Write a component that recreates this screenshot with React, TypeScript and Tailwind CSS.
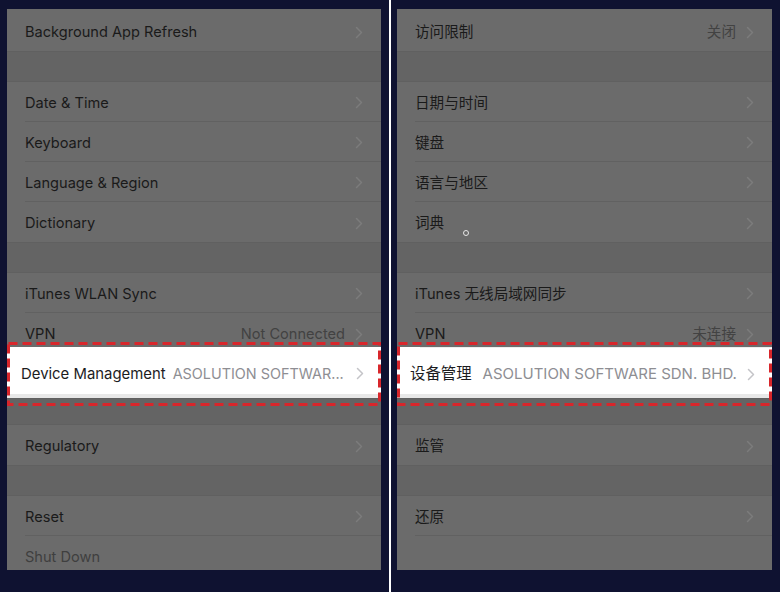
import React from "react";

const ROW_BG = "bg-[#6b6b6b]";

function Chevron({ color = "#7c7c7c" }: { color?: string }) {
  return (
    <svg width="8" height="13" viewBox="0 0 8 13" className="shrink-0">
      <path d="M1.5 1.5 L6.5 6.5 L1.5 11.5" fill="none" stroke={color} strokeWidth="1.5" strokeLinecap="round" strokeLinejoin="round" />
    </svg>
  );
}

function Row({
  label,
  value,
  chevron = true,
  border = true,
  h = "h-10",
  labelClass = "text-[#1a1a1a]",
  children,
}: {
  label: string;
  value?: string;
  chevron?: boolean;
  border?: boolean;
  h?: string;
  labelClass?: string;
  children?: React.ReactNode;
}) {
  return (
    <div className={`relative ${h} shrink-0 pl-[18px] ${ROW_BG} flex`}>
      <div className={`flex flex-1 items-center pt-[2px] pr-[18px] ${border ? "border-b border-[#616161]" : ""}`}>
        <span className={`whitespace-nowrap text-[14.6px] leading-5 ${labelClass}`}>{label}</span>
        <div className="ml-auto flex items-center gap-[10px]">
          {value && <span className="text-[14.6px] leading-5 text-[#424242]">{value}</span>}
          {chevron && <Chevron />}
        </div>
      </div>
      {children}
    </div>
  );
}

function Band({ h = "h-[31px]" }: { h?: string }) {
  return <div className={`${h} shrink-0 bg-[#646464] border-y border-[#606060]`} />;
}

function Highlight({
  label,
  value,
  width,
  pl,
  gap,
  labelSize,
  valueSize,
  line,
}: {
  label: string;
  value: string;
  width: number;
  pl: string;
  gap: string;
  labelSize: string;
  valueSize: string;
  line?: boolean;
}) {
  return (
    <div className="relative h-[51px] shrink-0 flex flex-col bg-white">
      {line && <div className="ml-[23px] h-px bg-[#ececec]" />}
      <div className={`flex h-[47px] items-center pt-[6px] ${pl} pr-[17px]`}>
        <span className={`shrink-0 whitespace-nowrap ${labelSize} leading-5 text-[#1c1c1e]`}>{label}</span>
        <span className={`${gap} whitespace-nowrap ${valueSize} leading-5 text-[#8e8e93]`}>{value}</span>
        <div className="ml-auto pl-2">
          <Chevron color="#c4c4c8" />
        </div>
      </div>
      <div className="h-[4px] bg-[#e8e8e8]" />
      <svg
        className="pointer-events-none absolute left-0 top-[-5px]"
        width={width}
        height={64}
        viewBox={`0 0 ${width} 64`}
      >
        <rect
          x="1.5"
          y="1.5"
          width={width - 3}
          height={61}
          fill="none"
          stroke="#d8262b"
          strokeWidth="3"
          strokeDasharray="9 5"
        />
      </svg>
    </div>
  );
}

function VpnRow({ value }: { value: string }) {
  return (
    <div className={`h-[34px] shrink-0 pl-[18px] ${ROW_BG} flex items-start pt-[11px] pr-[18px]`}>
      <span className="text-[14.6px] leading-5 text-[#1a1a1a]">VPN</span>
      <div className="ml-auto flex items-center gap-[10px] h-5">
        <span className="text-[14.6px] leading-5 text-[#424242]">{value}</span>
        <Chevron />
      </div>
    </div>
  );
}

function LeftPanel() {
  return (
    <div className={`relative flex h-[561px] w-[374px] flex-col overflow-hidden ${ROW_BG}`}>
      <Row label="Background App Refresh" h="h-[42px] pt-[2px]" border={false} />
      <Band />
      <Row label="Date & Time" />
      <Row label="Keyboard" />
      <Row label="Language & Region" />
      <Row label="Dictionary" border={false} />
      <Band />
      <Row label="iTunes WLAN Sync" />
      <VpnRow value="Not Connected" />
      <Highlight
        label="Device Management"
        value="ASOLUTION SOFTWAR..."
        width={374}
        pl="pl-[14px]"
        gap="ml-[7px]"
        labelSize="text-[14.9px]"
        valueSize="text-[14.4px]"
      />
      <Band h="h-[27px]" />
      <Row label="Regulatory" border={false} />
      <Band />
      <Row label="Reset" />
      <Row label="Shut Down" chevron={false} border={false} labelClass="text-[#3f3f3f]" />
    </div>
  );
}

function RightPanel() {
  return (
    <div className={`relative flex h-[561px] w-[375px] flex-col overflow-hidden ${ROW_BG}`}>
      <Row label="访问限制" value="关闭" h="h-[42px] pt-[2px]" border={false} />
      <Band />
      <Row label="日期与时间" />
      <Row label="键盘" />
      <Row label="语言与地区" />
      <Row label="词典" border={false}>
        <div className="absolute left-[66px] top-[28px] h-[6px] w-[6px] rounded-full border border-[#e6e6e6]" />
      </Row>
      <Band />
      <Row label="iTunes 无线局域网同步" />
      <VpnRow value="未连接" />
      <Highlight
        label="设备管理"
        value="ASOLUTION SOFTWARE SDN. BHD."
        width={375}
        pl="pl-[13px]"
        gap="ml-[11px]"
        labelSize="text-[15.4px]"
        valueSize="text-[15px]"
        line
      />
      <Band h="h-[27px]" />
      <Row label="监管" border={false} />
      <Band />
      <Row label="还原" />
      <Row label="" chevron={false} border={false} />
    </div>
  );
}

export default function App() {
  return (
    <div className="flex h-[592px] w-[780px] overflow-hidden bg-[#0f1231] font-['Inter','Noto_Sans_CJK_SC',sans-serif]">
      <div className="pl-[7px] pr-[8px] pt-[9px]">
        <LeftPanel />
      </div>
      <div className="w-[2px] bg-white" />
      <div className="pl-[6px] pt-[9px]">
        <RightPanel />
      </div>
    </div>
  );
}
